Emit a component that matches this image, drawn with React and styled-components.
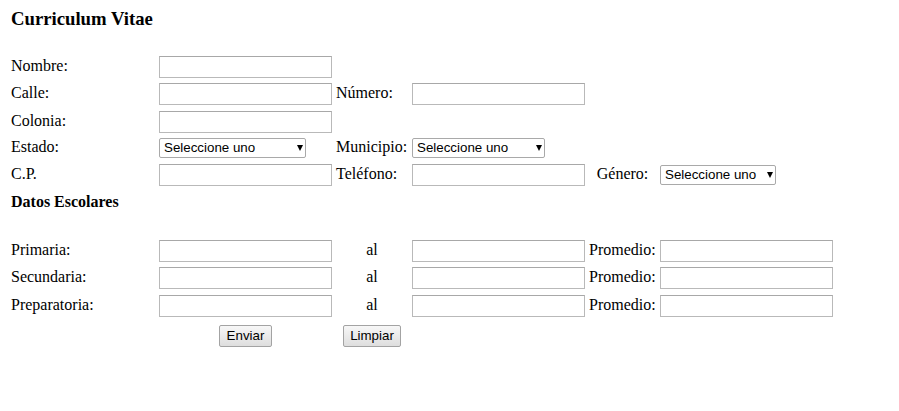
import React from "react";
import styled, { createGlobalStyle } from "styled-components";

const GlobalStyle = createGlobalStyle`
  html, body {
    margin: 0;
    padding: 0;
    background: #ffffff;
  }
  body {
    font-family: "Liberation Serif", "Times New Roman", serif;
    font-size: 16px;
    color: #000000;
  }
`;

const Page = styled.div`
  padding: 8px 10px;
`;

const Title = styled.h3`
  margin: 0;
  padding: 0 1px;
  font-size: 18.72px;
  line-height: 21.5px;
  font-weight: bold;
`;

const Form = styled.form`
  margin-top: 23.75px;
  display: flex;
  flex-direction: column;
`;

const Row = styled.div`
  display: grid;
  grid-template-columns: 146px 175px 74px 175px 69px 175px;
  column-gap: 2px;
  align-items: center;
  height: ${(p) => p.$h}px;
`;

const Cell = styled.div`
  padding: 0 1px;
  text-align: ${(p) => p.$align || "left"};
  white-space: nowrap;
  line-height: 18px;
  grid-column: ${(p) => p.$span || "auto"};
`;

const Label = styled(Cell)`
  position: relative;
  top: -1px;
`;

const Section = styled(Cell)`
  font-weight: bold;
`;

const TextInput = styled.input`
  display: block;
  box-sizing: border-box;
  width: 173px;
  height: 22px;
  margin: 0;
  padding: 1px 2px;
  border: 1px solid #b9b9b9;
  border-top-color: #a8a8a8;
  background: #ffffff;
  font-family: Arial, "Liberation Sans", sans-serif;
  font-size: 13.33px;
  outline: none;
`;

const SelectWrap = styled.div`
  position: relative;
  width: ${(p) => p.$w}px;
  height: 20px;
`;

const Select = styled.select`
  display: block;
  appearance: none;
  -webkit-appearance: none;
  box-sizing: border-box;
  width: 100%;
  height: 20px;
  margin: 0;
  padding: 0 14px 0 4px;
  border: 1px solid #a9a9a9;
  border-radius: 2px;
  background: #ffffff;
  color: #000000;
  font-family: Arial, "Liberation Sans", sans-serif;
  font-size: 13.33px;
  line-height: 18px;
  outline: none;
`;

const Arrow = styled.span`
  position: absolute;
  right: 3px;
  top: 7px;
  width: 0;
  height: 0;
  border-left: 3px solid transparent;
  border-right: 3px solid transparent;
  border-top: 6px solid #000000;
  pointer-events: none;
`;

const Button = styled.button`
  display: inline-block;
  box-sizing: border-box;
  width: ${(p) => p.$w}px;
  height: 22px;
  margin: 0;
  padding: 0 6px;
  border: 1px solid #a3a3a3;
  border-radius: 2px;
  background: linear-gradient(#f7f7f7, #dedede);
  color: #000000;
  font-family: Arial, "Liberation Sans", sans-serif;
  font-size: 13.33px;
`;

function Dropdown({ w }) {
  return (
    <SelectWrap $w={w}>
      <Select defaultValue="">
        <option value="">Seleccione uno</option>
      </Select>
      <Arrow />
    </SelectWrap>
  );
}

const escolares = ["Primaria:", "Secundaria:", "Preparatoria:"];
const escolaresH = [27.1, 27.4, 28.9];

export default function App() {
  return (
    <Page>
      <GlobalStyle />
      <Title>Curriculum Vitae</Title>
      <Form onSubmit={(e) => e.preventDefault()}>
        <Row $h={27.5}>
          <Label>Nombre:</Label>
          <Cell>
            <TextInput type="text" />
          </Cell>
        </Row>
        <Row $h={27.35}>
          <Label>Calle:</Label>
          <Cell>
            <TextInput type="text" />
          </Cell>
          <Label>Número:</Label>
          <Cell>
            <TextInput type="text" />
          </Cell>
        </Row>
        <Row $h={26.9}>
          <Label>Colonia:</Label>
          <Cell>
            <TextInput type="text" />
          </Cell>
        </Row>
        <Row $h={26.65}>
          <Label>Estado:</Label>
          <Cell>
            <Dropdown w={147} />
          </Cell>
          <Label>Municipio:</Label>
          <Cell>
            <Dropdown w={133} />
          </Cell>
        </Row>
        <Row $h={26.65}>
          <Label>C.P.</Label>
          <Cell>
            <TextInput type="text" />
          </Cell>
          <Label>Teléfono:</Label>
          <Cell>
            <TextInput type="text" />
          </Cell>
          <Label $align="center">Género:</Label>
          <Cell>
            <Dropdown w={116} />
          </Cell>
        </Row>
        <Row $h={26.6}>
          <Section $span="1 / 3">Datos Escolares</Section>
        </Row>
        <Row $h={22.2} />
        {escolares.map((nivel, i) => (
          <Row key={nivel} $h={escolaresH[i]}>
            <Label>{nivel}</Label>
            <Cell>
              <TextInput type="text" />
            </Cell>
            <Label $align="center">al</Label>
            <Cell>
              <TextInput type="text" />
            </Cell>
            <Label>Promedio:</Label>
            <Cell>
              <TextInput type="text" />
            </Cell>
          </Row>
        ))}
        <Row $h={30.2}>
          <Cell />
          <Cell $align="center">
            <Button type="submit" $w={53}>
              Enviar
            </Button>
          </Cell>
          <Cell $align="center">
            <Button type="reset" $w={58}>
              Limpiar
            </Button>
          </Cell>
        </Row>
      </Form>
    </Page>
  );
}
